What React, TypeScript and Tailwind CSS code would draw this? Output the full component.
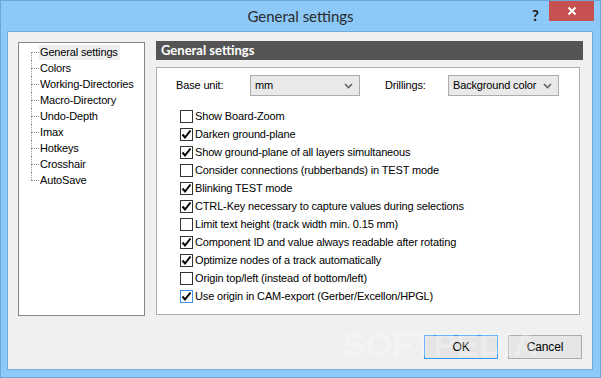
const treeItems = [
  'General settings',
  'Colors',
  'Working-Directories',
  'Macro-Directory',
  'Undo-Depth',
  'Imax',
  'Hotkeys',
  'Crosshair',
  'AutoSave',
]

const options = [
  { label: 'Show Board-Zoom', checked: false },
  { label: 'Darken ground-plane', checked: true },
  { label: 'Show ground-plane of all layers simultaneous', checked: true },
  { label: 'Consider connections (rubberbands) in TEST mode', checked: false },
  { label: 'Blinking TEST mode', checked: true },
  { label: 'CTRL-Key necessary to capture values during selections', checked: true },
  { label: 'Limit text height (track width min. 0.15 mm)', checked: false },
  { label: 'Component ID and value always readable after rotating', checked: true },
  { label: 'Optimize nodes of a track automatically', checked: true },
  { label: 'Origin top/left (instead of bottom/left)', checked: false },
  { label: 'Use origin in CAM-export (Gerber/Excellon/HPGL)', checked: true, focused: true },
]

function CheckBox({ checked, focused }: { checked: boolean; focused?: boolean }) {
  return (
    <span
      className={
        'flex h-[13px] w-[13px] shrink-0 items-center justify-center border bg-white ' +
        (focused ? 'border-[#3c8ee6]' : 'border-[#333333]')
      }
    >
      {checked && (
        <svg width="11" height="11" viewBox="0 0 11 11">
          <path d="M1.5 5.5 L4 8.5 L9.5 1.5" fill="none" stroke="#000" strokeWidth="2" />
        </svg>
      )}
    </span>
  )
}

function Select({ value, width }: { value: string; width: string }) {
  return (
    <div
      className={
        'flex h-[21px] items-center justify-between border border-[#acacac] bg-[#e9e9e9] pl-[4px] pr-[6px] text-black ' +
        width
      }
    >
      <span className="whitespace-nowrap">{value}</span>
      <svg width="9" height="6" viewBox="0 0 9 6">
        <path d="M1 1 L4.5 4.5 L8 1" fill="none" stroke="#666" strokeWidth="1.6" />
      </svg>
    </div>
  )
}

export default function App() {
  return (
    <div
      className="relative flex h-[378px] w-[601px] flex-col border border-[#6ea6d8] bg-[#8cc8f8] text-[11px] leading-none tracking-[-0.15px]"
      style={{ fontFamily: '"Liberation Sans", Arial, sans-serif' }}
    >
      {/* title bar */}
      <div className="relative flex h-[30px] shrink-0 items-center justify-center tracking-normal" style={{ fontFamily: 'Lato, sans-serif' }}>
        <span className="text-[15px] text-[#2b2b2b]">General settings</span>
        <span className="absolute right-[61px] top-[7px] text-[15px] font-bold text-[#1a1a1a]">?</span>
        <div className="absolute right-[6px] top-0 flex h-[20px] w-[45px] items-center justify-center bg-[#c75050]">
          <svg width="10" height="10" viewBox="0 0 10 10">
            <path d="M1.5 1.5 L8.5 8.5 M8.5 1.5 L1.5 8.5" stroke="#fff" strokeWidth="2" />
          </svg>
        </div>
      </div>

      {/* client area */}
      <div className="ml-[6px] mr-[7px] mb-[7px] flex flex-1 flex-col border border-[#78a9d8] bg-[#f0f0f0]">
        <div className="flex gap-[11px] pl-[10px] pt-[9px]">
          {/* tree */}
          <div className="mt-[1px] h-[274px] w-[127px] border border-[#828790] bg-white pl-[12px] pt-[1px]">
            {treeItems.map((item, i) => (
              <div key={item} className="flex h-[16px] items-center">
                <div className="flex h-full w-[8px] shrink-0 flex-col">
                  <div className={'h-[8px] ' + (i === 0 ? '' : 'border-l border-dotted border-[#9a9a9a]')} />
                  <div
                    className={
                      'h-[8px] border-t border-dotted border-[#9a9a9a] ' +
                      (i === treeItems.length - 1 ? '' : 'border-l')
                    }
                  />
                </div>
                <span
                  className={
                    'flex h-[15px] items-center whitespace-nowrap pl-[1px] pr-[2px] text-black ' +
                    (i === 0 ? 'bg-[#eeeeee]' : '')
                  }
                >
                  {item}
                </span>
              </div>
            ))}
          </div>

          {/* right side */}
          <div className="flex w-[427px] flex-col">
            <div
              className="flex h-[19px] items-center bg-[#555555] pl-[5px] text-[13px] font-bold tracking-normal text-white"
              style={{ fontFamily: 'Lato, sans-serif' }}
            >
              General settings
            </div>
            <div className="mt-[7px] h-[248px] w-[424px] border border-[#adadad] bg-white">
              <div className="flex items-center pt-[7px] pl-[19px]">
                <span className="w-[74px] whitespace-nowrap">Base unit:</span>
                <Select value="mm" width="w-[110px]" />
                <span className="ml-[25px] w-[63px] whitespace-nowrap">Drillings:</span>
                <Select value="Background color" width="w-[111px]" />
              </div>
              <div className="mt-[11px] flex flex-col pl-[23px]">
                {options.map((o) => (
                  <div key={o.label} className="flex h-[18px] items-center gap-[2px]">
                    <CheckBox checked={o.checked} focused={o.focused} />
                    <span className="whitespace-nowrap text-black">{o.label}</span>
                  </div>
                ))}
              </div>
            </div>
          </div>
        </div>

        {/* buttons */}
        <div className="mt-[19px] flex justify-end gap-[10px] pr-[10px]">
          <button className="flex h-[24px] w-[74px] items-center justify-center border border-[#3399ff] bg-[#e5e5e5] text-[12px] text-black">
            OK
          </button>
          <button className="flex h-[24px] w-[74px] items-center justify-center border border-[#acacac] bg-[#e5e5e5] text-[12px] text-black">
            Cancel
          </button>
        </div>
      </div>

      {/* watermark */}
      <span className="pointer-events-none absolute left-[342px] top-[326px] text-[34px] font-bold tracking-normal text-white/30">
        SOFTPEDIA
      </span>
    </div>
  )
}
